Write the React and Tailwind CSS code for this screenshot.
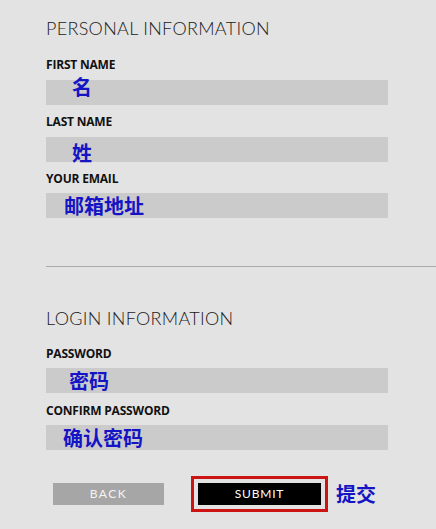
export default function App() {
  const cjk = "font-['Noto_Sans_CJK_SC',sans-serif] font-bold text-[#1414c4] text-[20px] leading-none";
  const label = "text-[12px] leading-none font-bold text-[#111] tracking-[-0.2px] font-['Open_Sans',sans-serif]";
  const heading = "text-[18px] leading-none font-light text-[#1a1a1a] tracking-[0.3px]";

  return (
    <div className="w-[436px] h-[529px] overflow-hidden bg-[#e3e3e3] font-['Lato',sans-serif]">
      <div className="pl-[46px] pt-[18px]">
        {/* personal */}
        <div className="pr-[48px]">
          <h2 className={heading + " pt-[1px]"}>PERSONAL INFORMATION</h2>

          <p className={label + " mt-[22px]"}>FIRST NAME</p>
          <div className="mt-[9px] h-[25px] bg-[#cbcbcb] flex items-center pl-[26px]">
            <span className={cjk + " -mt-[11px]"}>名</span>
          </div>

          <p className={label + " mt-[11px]"}>LAST NAME</p>
          <div className="mt-[9px] h-[25px] bg-[#cbcbcb] flex items-center pl-[26px]">
            <span className={cjk + " mt-[6px]"}>姓</span>
          </div>

          <p className={label + " mt-[11px]"}>YOUR EMAIL</p>
          <div className="mt-[8px] h-[25px] bg-[#cbcbcb] flex items-center pl-[18px]">
            <span className={cjk}>邮箱地址</span>
          </div>
        </div>

        <div className="mt-[48px] h-px bg-[#aaaaaa]"></div>

        {/* login */}
        <div className="pr-[48px]">
          <h2 className={heading + " mt-[42px]"}>LOGIN INFORMATION</h2>

          <p className={label + " mt-[21px]"}>PASSWORD</p>
          <div className="mt-[8px] h-[25px] bg-[#cbcbcb] flex items-center pl-[23px]">
            <span className={cjk}>密码</span>
          </div>

          <p className={label + " mt-[12px]"}>CONFIRM PASSWORD</p>
          <div className="mt-[8px] h-[25px] bg-[#cbcbcb] flex items-center pl-[17px]">
            <span className={cjk}>确认密码</span>
          </div>

          <div className="mt-[26px] ml-[7px] flex items-center">
            <button className="w-[111px] h-[22px] bg-[#a6a6a6] text-[#f4f4f4] text-[12px] tracking-[1.5px] leading-none">BACK</button>
            <div className="ml-[27px] border-[3px] border-[#cc1414] p-[4px]">
              <button className="block w-[123px] h-[22px] bg-black text-white text-[12px] tracking-[0.8px] leading-none">SUBMIT</button>
            </div>
            <span className={cjk + " ml-[8px]"}>提交</span>
          </div>
        </div>
      </div>
    </div>
  );
}
